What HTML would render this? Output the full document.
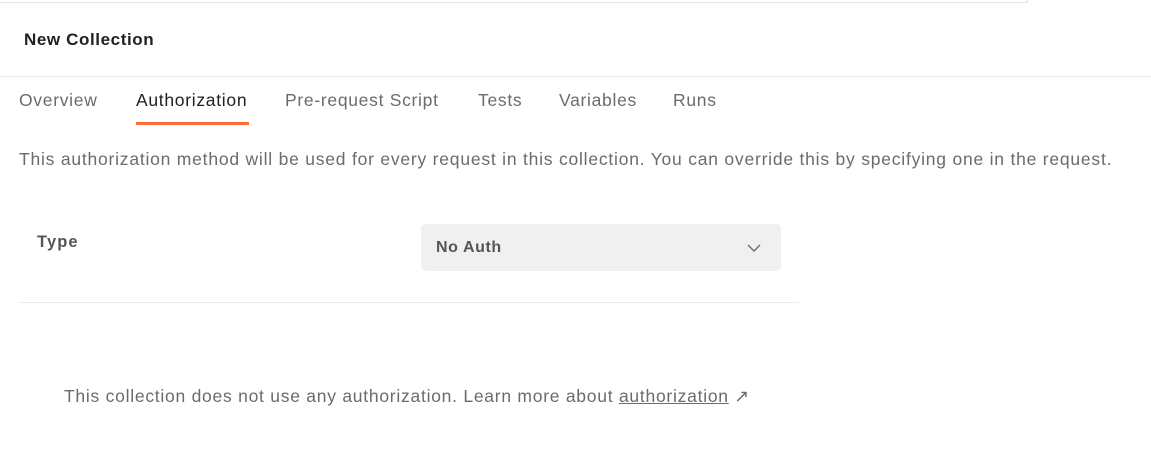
<!DOCTYPE html>
<html><head><style>
body{margin:0;width:1151px;height:451px;background:#fff;font-family:"Liberation Sans",sans-serif;color:#6b6b6b;position:relative;overflow:hidden}
.a{position:absolute;white-space:nowrap}
.tab{position:absolute;top:90px;font-size:17.5px;letter-spacing:0.7px;color:#6b6b6b}
</style></head><body>
<div class="a" style="left:0;top:2px;width:1027px;height:1px;background:#e6e6e6"></div>
<div class="a" style="left:1027px;top:0;width:1px;height:3px;background:#e6e6e6"></div>
<div class="a" style="left:24px;top:30px;font-size:17px;letter-spacing:0.6px;font-weight:bold;color:#212121">New Collection</div>
<div class="a" style="left:0;top:76px;width:1151px;height:1px;background:#ebebeb"></div>
<div class="tab" style="left:19px">Overview</div>
<div class="tab" style="left:136px;color:#212121">Authorization</div>
<div class="tab" style="left:285px">Pre-request Script</div>
<div class="tab" style="left:478px">Tests</div>
<div class="tab" style="left:559px">Variables</div>
<div class="tab" style="left:673px">Runs</div>
<div class="a" style="left:136px;top:122px;width:113px;height:3px;background:#ff6c37"></div>
<div class="a" style="left:19px;top:149px;font-size:17.5px;letter-spacing:0.78px">This authorization method will be used for every request in this collection. You can override this by specifying one in the request.</div>
<div class="a" style="left:37px;top:233px;font-size:16.5px;letter-spacing:1.1px;font-weight:bold;color:#555">Type</div>
<div class="a" style="left:421px;top:224px;width:360px;height:47px;background:#f0f0f0;border-radius:5px"></div>
<div class="a" style="left:436px;top:239px;font-size:16px;letter-spacing:0.6px;font-weight:bold;color:#555">No Auth</div>
<svg class="a" style="left:746px;top:242px" width="16" height="12" viewBox="0 0 16 12"><path d="M2 3 L8 9 L14 3" fill="none" stroke="#6b6b6b" stroke-width="1.4"/></svg>
<div class="a" style="left:19px;top:302px;width:780px;height:1px;background:#ebebeb"></div>
<div class="a" style="left:64px;top:386px;font-size:17.5px;letter-spacing:0.74px">This collection does not use any authorization. Learn more about <span style="text-decoration:underline">authorization</span> ↗</div>
</body></html>
